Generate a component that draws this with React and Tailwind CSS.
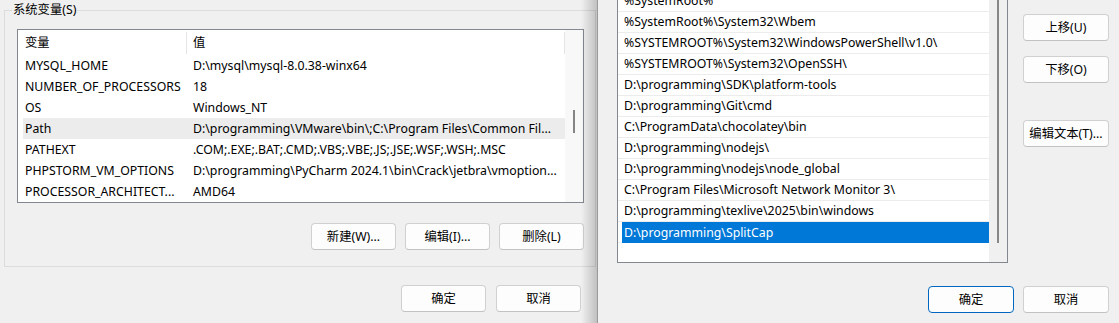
const sysVars = [
  ['MYSQL_HOME', 'D:\\mysql\\mysql-8.0.38-winx64'],
  ['NUMBER_OF_PROCESSORS', '18'],
  ['OS', 'Windows_NT'],
  ['Path', 'D:\\programming\\VMware\\bin\\;C:\\Program Files\\Common Fil...'],
  ['PATHEXT', '.COM;.EXE;.BAT;.CMD;.VBS;.VBE;.JS;.JSE;.WSF;.WSH;.MSC'],
  ['PHPSTORM_VM_OPTIONS', 'D:\\programming\\PyCharm 2024.1\\bin\\Crack\\jetbra\\vmoption...'],
  ['PROCESSOR_ARCHITECT...', 'AMD64'],
];

const pathEntries = [
  '%SystemRoot%',
  '%SystemRoot%\\System32\\Wbem',
  '%SYSTEMROOT%\\System32\\WindowsPowerShell\\v1.0\\',
  '%SYSTEMROOT%\\System32\\OpenSSH\\',
  'D:\\programming\\SDK\\platform-tools',
  'D:\\programming\\Git\\cmd',
  'C:\\ProgramData\\chocolatey\\bin',
  'D:\\programming\\nodejs\\',
  'D:\\programming\\nodejs\\node_global',
  'C:\\Program Files\\Microsoft Network Monitor 3\\',
  'D:\\programming\\texlive\\2025\\bin\\windows',
  'D:\\programming\\SplitCap',
];

const Btn = ({ children, w = 'w-[85px]', primary = false }) => (
  <button
    className={
      'h-[27px] ' + w + ' shrink-0 rounded-[4px] border bg-[#fdfdfd] text-[12.3px] leading-[16px] text-black ' +
      (primary ? 'border-[#0067c0]' : 'border-[#d0d0d0] border-b-[#c2c2c2]')
    }
  >
    {children}
  </button>
);

export default function App() {
  const selected = pathEntries.length - 1;

  return (
    <div className="flex h-[323px] w-[1119px] overflow-hidden bg-[#f0f0f0] font-['Noto_Sans','Noto_Sans_CJK_SC',sans-serif] text-[12.3px] leading-[16px] text-black">
      {/* environment variables dialog (behind) */}
      <div className="relative flex w-[597px] shrink-0 flex-col overflow-hidden">
        <fieldset className="m-0 ml-[4px] mt-[2px] w-[592px] min-w-0 border border-[#dcdcdc] p-0">
          <legend className="ml-[7px] px-[1px] leading-[16px]">系统变量(S)</legend>
          <div className="pl-[12px] pt-[11px] pb-[16px]">
            <div className="flex h-[174px] w-[567px] border border-[#828790] bg-white">
              <div className="flex w-[547px] flex-col overflow-hidden">
                <div className="flex h-[25px] items-center">
                  <div className="flex h-[22px] w-[169px] items-center border-r border-[#e5e5e5] pl-[7px]">变量</div>
                  <div className="flex h-[22px] flex-1 items-center border-r border-[#e5e5e5] pl-[6px]">值</div>
                </div>
                {sysVars.map(([name, value], i) => (
                  <div
                    key={i}
                    className={'ml-[5px] flex h-[21px] items-center ' + (name === 'Path' ? 'bg-[#ececec]' : '')}
                  >
                    <div className="w-[163px] shrink-0 whitespace-nowrap pl-[2px]">{name}</div>
                    <div className="whitespace-nowrap pl-[7px]">{value}</div>
                  </div>
                ))}
              </div>
              <div className="flex w-[18px] flex-col bg-[#f8f8f8] pt-[80px]">
                <div className="ml-[8px] h-[23px] w-[2px] bg-[#858585]" />
              </div>
            </div>
            <div className="mt-[20px] flex w-[567px] justify-end gap-[9px]">
              <Btn>新建(W)...</Btn>
              <Btn>编辑(I)...</Btn>
              <Btn>删除(L)</Btn>
            </div>
          </div>
        </fieldset>
        <div className="mt-[18px] flex justify-end gap-[10px] pr-[16px]">
          <Btn>确定</Btn>
          <Btn>取消</Btn>
        </div>
        {/* shadow cast by the front dialog */}
        <div className="absolute top-0 right-0 bottom-0 w-[16px] bg-gradient-to-r from-transparent to-black/20" />
      </div>

      {/* edit path dialog (front) */}
      <div className="flex flex-1 flex-col border-l border-[#9a9a9a] bg-[#f0f0f0]">
        <div className="flex h-[263px] pl-[19px]">
          <div className="flex h-full w-[391px] overflow-hidden border-x border-b border-[#828790] bg-white">
            <div className="mt-[-9px] flex w-[371px] flex-col">
              {pathEntries.map((p, i) => (
                <div key={i} className="h-[21px] border-b border-[#ececec]">
                  <div
                    className={
                      'ml-[4px] flex h-[20px] items-center whitespace-nowrap pl-[2px] ' +
                      (i === selected ? 'h-[21px] bg-[#0078d7] text-white' : '')
                    }
                  >
                    {p}
                  </div>
                </div>
              ))}
            </div>
            <div className="flex w-[18px] flex-col bg-[#f0f0f0]">
              <div className="ml-[8px] h-[243px] w-[2px] bg-[#888888]" />
            </div>
          </div>
          <div className="ml-[15px] flex flex-col">
            <div className="mt-[14px]">
              <Btn w="w-[86px]">上移(U)</Btn>
            </div>
            <div className="mt-[15px]">
              <Btn w="w-[86px]">下移(O)</Btn>
            </div>
            <div className="mt-[37px]">
              <Btn w="w-[86px]">编辑文本(T)...</Btn>
            </div>
          </div>
        </div>
        <div className="mt-[23px] flex justify-end gap-[9px] pr-[10px]">
          <Btn w="w-[86px]" primary>确定</Btn>
          <Btn w="w-[86px]">取消</Btn>
        </div>
      </div>
    </div>
  );
}
